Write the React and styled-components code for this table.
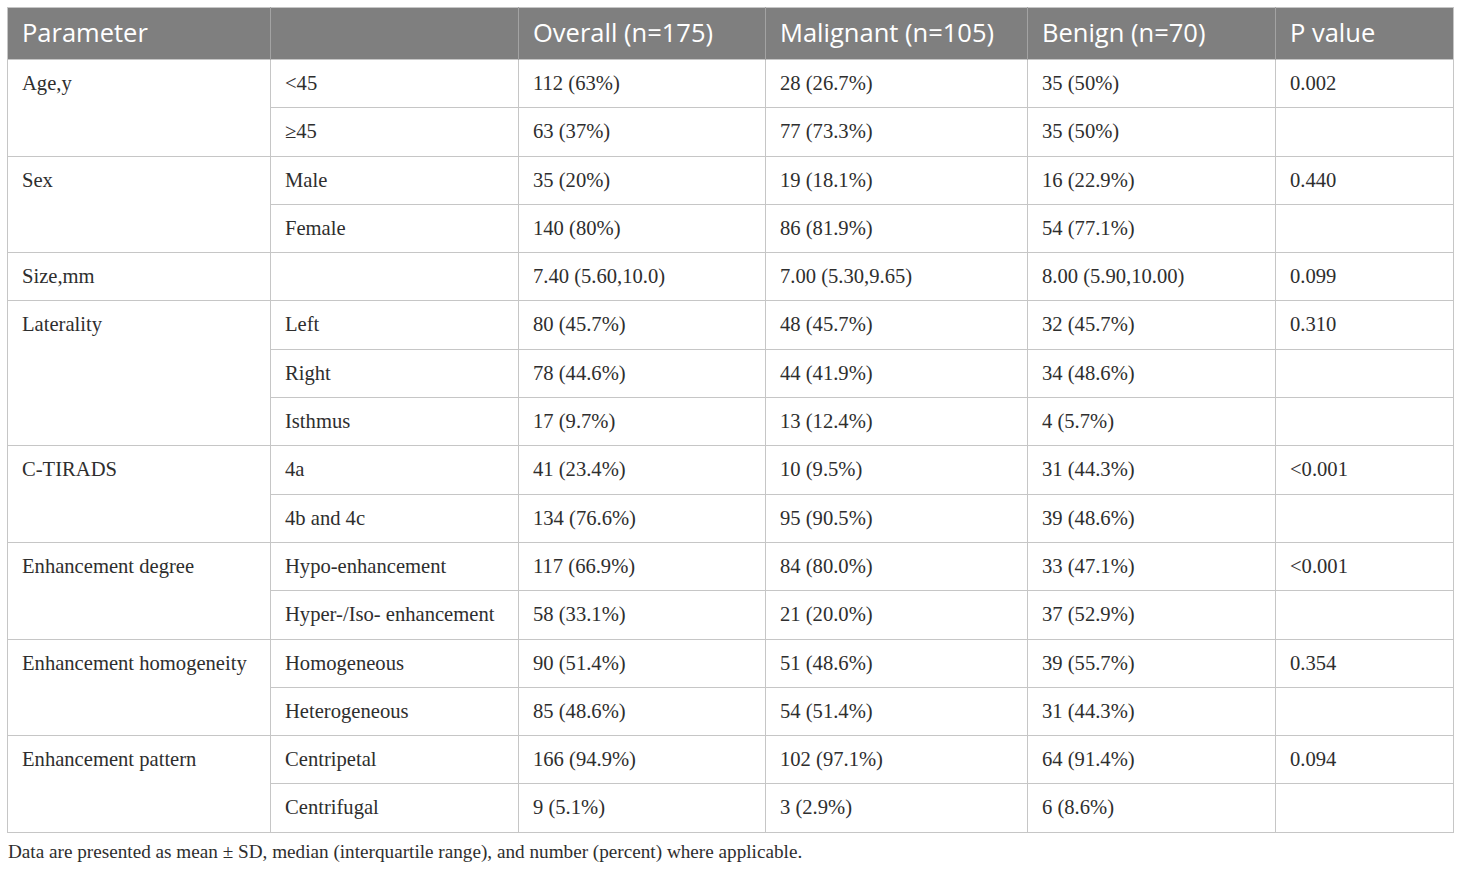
import styled, { createGlobalStyle } from "styled-components";

const rows = [
  {
    label: "Age,y",
    p: "0.002",
    items: [
      ["<45", "112 (63%)", "28 (26.7%)", "35 (50%)"],
      ["≥45", "63 (37%)", "77 (73.3%)", "35 (50%)"],
    ],
  },
  {
    label: "Sex",
    p: "0.440",
    items: [
      ["Male", "35 (20%)", "19 (18.1%)", "16 (22.9%)"],
      ["Female", "140 (80%)", "86 (81.9%)", "54 (77.1%)"],
    ],
  },
  {
    label: "Size,mm",
    p: "0.099",
    items: [["", "7.40 (5.60,10.0)", "7.00 (5.30,9.65)", "8.00 (5.90,10.00)"]],
  },
  {
    label: "Laterality",
    p: "0.310",
    items: [
      ["Left", "80 (45.7%)", "48 (45.7%)", "32 (45.7%)"],
      ["Right", "78 (44.6%)", "44 (41.9%)", "34 (48.6%)"],
      ["Isthmus", "17 (9.7%)", "13 (12.4%)", "4 (5.7%)"],
    ],
  },
  {
    label: "C-TIRADS",
    p: "<0.001",
    items: [
      ["4a", "41 (23.4%)", "10 (9.5%)", "31 (44.3%)"],
      ["4b and 4c", "134 (76.6%)", "95 (90.5%)", "39 (48.6%)"],
    ],
  },
  {
    label: "Enhancement degree",
    p: "<0.001",
    items: [
      ["Hypo-enhancement", "117 (66.9%)", "84 (80.0%)", "33 (47.1%)"],
      ["Hyper-/Iso- enhancement", "58 (33.1%)", "21 (20.0%)", "37 (52.9%)"],
    ],
  },
  {
    label: "Enhancement homogeneity",
    p: "0.354",
    items: [
      ["Homogeneous", "90 (51.4%)", "51 (48.6%)", "39 (55.7%)"],
      ["Heterogeneous", "85 (48.6%)", "54 (51.4%)", "31 (44.3%)"],
    ],
  },
  {
    label: "Enhancement pattern",
    p: "0.094",
    items: [
      ["Centripetal", "166 (94.9%)", "102 (97.1%)", "64 (91.4%)"],
      ["Centrifugal", "9 (5.1%)", "3 (2.9%)", "6 (8.6%)"],
    ],
  },
];

const GlobalStyle = createGlobalStyle`
  body {
    margin: 0;
    background: #ffffff;
  }
`;

const Page = styled.div`
  padding: 7px 7px 0 7px;
`;

const Table = styled.table`
  width: 1446px;
  border-collapse: collapse;
  table-layout: fixed;
  border: 1px solid #c6c6c6;
`;

const HeadCell = styled.th`
  box-sizing: border-box;
  height: 52px;
  padding: 0 14px 3px 14px;
  background: #7f7f7f;
  color: #ffffff;
  font-family: "Open Sans", "Noto Sans", sans-serif;
  font-size: 25.5px;
  font-weight: 400;
  text-align: left;
  border-left: 1px solid #a3a3a3;
  &:first-child {
    border-left: none;
  }
`;

const Cell = styled.td`
  box-sizing: border-box;
  height: 48.3px;
  padding: 11px 14px 0 14px;
  vertical-align: top;
  border: 1px solid #c6c6c6;
  color: #2e2e2e;
  font-family: "Liberation Serif", "DejaVu Serif", serif;
  font-size: 20.6px;
  line-height: 24px;
`;

const Note = styled.p`
  margin: 8px 0 0 1px;
  color: #2e2e2e;
  font-family: "Liberation Serif", "DejaVu Serif", serif;
  font-size: 19.2px;
`;

export default function App() {
  return (
    <Page>
      <GlobalStyle />
      <Table>
        <colgroup>
          <col style={{ width: 263 }} />
          <col style={{ width: 248 }} />
          <col style={{ width: 247 }} />
          <col style={{ width: 262 }} />
          <col style={{ width: 248 }} />
          <col style={{ width: 178 }} />
        </colgroup>
        <thead>
          <tr>
            <HeadCell>Parameter</HeadCell>
            <HeadCell />
            <HeadCell>Overall (n=175)</HeadCell>
            <HeadCell>Malignant (n=105)</HeadCell>
            <HeadCell>Benign (n=70)</HeadCell>
            <HeadCell>P value</HeadCell>
          </tr>
        </thead>
        <tbody>
          {rows.flatMap((group) =>
            group.items.map((item, i) => (
              <tr key={group.label + i}>
                {i === 0 && (
                  <Cell rowSpan={group.items.length}>{group.label}</Cell>
                )}
                {item.map((value, j) => (
                  <Cell key={j}>{value}</Cell>
                ))}
                <Cell>{i === 0 ? group.p : ""}</Cell>
              </tr>
            ))
          )}
        </tbody>
      </Table>
      <Note>
        Data are presented as mean ± SD, median (interquartile range), and
        number (percent) where applicable.
      </Note>
    </Page>
  );
}
